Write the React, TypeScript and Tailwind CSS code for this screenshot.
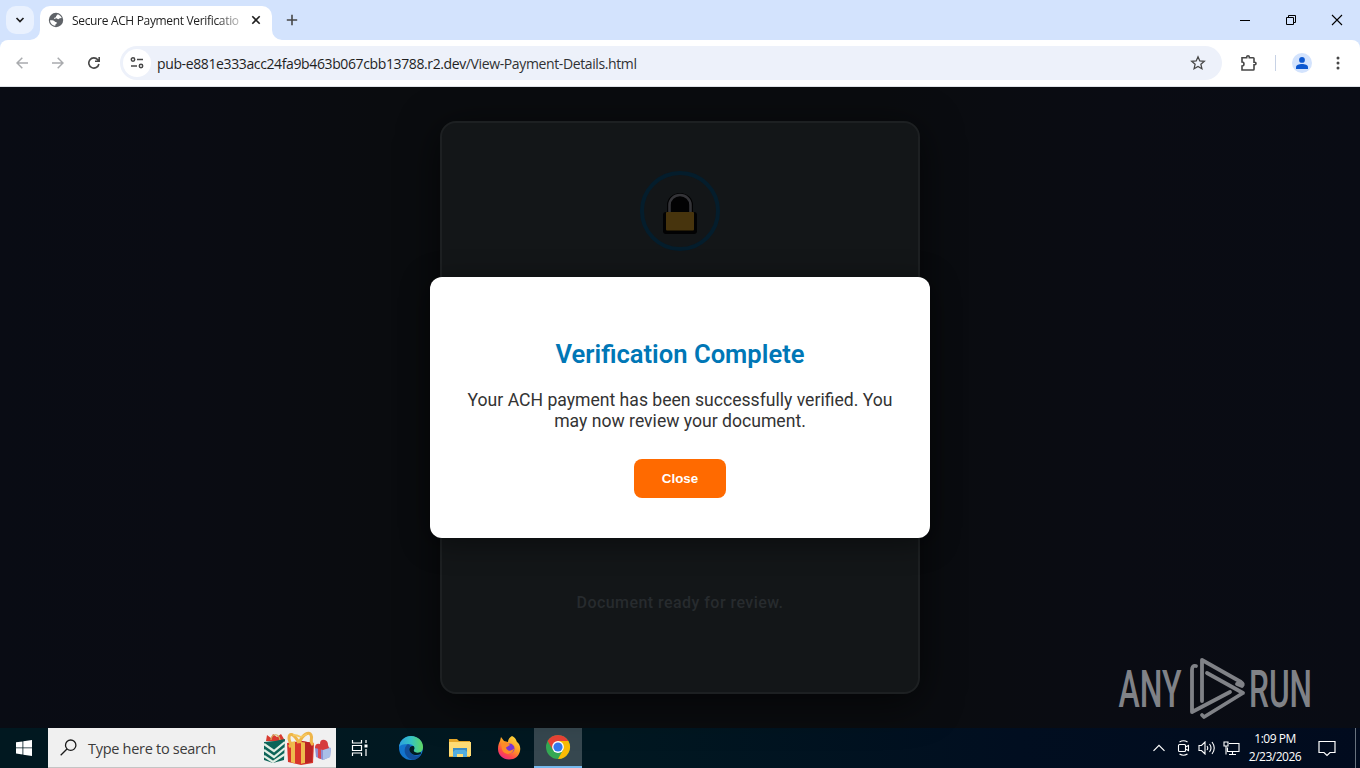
import React from 'react';

const TabStrip: React.FC = () => (
  <div className="flex h-10 items-start bg-[#d3e3fd]">
    <button className="ml-1.5 mt-1.5 flex h-7 w-7 items-center justify-center rounded-[10px] bg-[#e9f1fe]">
      <svg width="10" height="8" viewBox="0 0 10 8" fill="none" stroke="#1f1f1f" strokeWidth="1.7">
        <path d="M1.5 2l3.5 3.5L8.5 2" />
      </svg>
    </button>
    <svg className="mt-[30px] ml-[-4px]" width="10" height="10" viewBox="0 0 10 10">
      <path d="M10 0v10H0A10 10 0 0 0 10 0z" fill="#fff" />
    </svg>
    <div className="mt-1.5 flex h-[34px] w-[232px] items-center rounded-t-[10px] bg-white pb-1.5 pl-2">
      <svg className="mr-2 shrink-0" width="16" height="16" viewBox="0 0 16 16">
        <circle cx="8" cy="8" r="7.2" fill="#5f6368" />
        <path d="M9.500 2.200c2 .6 3.600 2 4.200 3.900l-1.900.2c-.8 0-.8.900-1.600.9-.9 0-.8-1-1.800-1-.9 0-1 .9-1.900.7-.8-.2-.3-1.300.5-1.400.8 0 1.100-.6 1.100-1.300 0-.8 1.300-.8 1.400-2z" fill="#fff" />
        <path d="M2 8.300c2-.3 4 .2 4.800 1.300.6.8 2 .3 2 1.300s-1.200.8-1.400 1.700l-.2 1.300C4.300 13.500 2.100 11.200 2 8.300z" fill="#fff" />
      </svg>
      <span className="w-[167px] shrink-0 whitespace-nowrap pt-0.5 font-['Open_Sans','Noto_Sans',sans-serif] text-[12px] leading-5 tracking-[-0.33px] text-[#1f1f1f] [mask-image:linear-gradient(to_right,black_86%,rgba(0,0,0,0.3))]">
        Secure ACH Payment Verificatio
      </span>
      <svg className="ml-3 shrink-0" width="10" height="10" viewBox="0 0 10 10" stroke="#1f1f1f" strokeWidth="1.6">
        <path d="M1.300 1.300l7.400 7.400M8.700 1.300L1.300 8.700" />
      </svg>
    </div>
    <svg className="mt-[30px]" width="10" height="10" viewBox="0 0 10 10">
      <path d="M0 0v10h10A10 10 0 0 1 0 0z" fill="#fff" />
    </svg>
    <svg className="ml-1 mt-[14px]" width="12" height="12" viewBox="0 0 12 12" stroke="#474747" strokeWidth="1.6">
      <path d="M6 .8v10.400M.8 6h10.400" />
    </svg>
    <div className="ml-auto mr-[17px] mt-[14px] flex gap-[34px]">
      <svg width="12" height="12" viewBox="0 0 12 12" stroke="#000" fill="none">
        <path d="M1 6.500h10" />
      </svg>
      <svg width="12" height="12" viewBox="0 0 12 12" stroke="#000" fill="none">
        <path d="M1.500 3.500h7v7h-7zM3.500 3.500v-2h7v7h-2" />
      </svg>
      <svg width="12" height="12" viewBox="0 0 12 12" stroke="#000" strokeWidth="1.100" fill="none">
        <path d="M1 1l10 10M11 1L1 11" />
      </svg>
    </div>
  </div>
);

const Toolbar: React.FC = () => (
  <div className="h-[47px] bg-[#d3e3fd]">
    <div className="flex h-[47px] items-center rounded-t-[8px] border-b border-[#dfe3e8] bg-white">
      <div className="ml-4 flex gap-6">
        <svg width="12" height="12" viewBox="0 0 12 12" fill="none" stroke="#a9abae" strokeWidth="1.500">
          <path d="M12 6H1M6.300.7L1 6l5.300 5.300" />
        </svg>
        <svg width="12" height="12" viewBox="0 0 12 12" fill="none" stroke="#a9abae" strokeWidth="1.500">
          <path d="M0 6h11M5.700.7L11 6l-5.300 5.300" />
        </svg>
        <svg width="12" height="12" viewBox="0 0 12 12" fill="none" stroke="#474747" strokeWidth="1.600">
          <path d="M10.900 7A5.100 5.100 0 1 1 9.800 2.700L11 4M11.200 0v4.300H7" />
        </svg>
      </div>
      <div className="ml-5 flex h-[34px] w-[1102px] items-center rounded-full bg-[#edf1fa] pl-[3px]">
        <div className="flex h-7 w-7 items-center justify-center rounded-full bg-white">
          <svg width="14" height="12" viewBox="0 0 14 12" fill="none" stroke="#474747" strokeWidth="1.500">
            <circle cx="3" cy="2.500" r="1.700" />
            <path d="M7 2.500h6M1 9h6" />
            <circle cx="11" cy="9" r="1.700" />
          </svg>
        </div>
        <span className="ml-1.5 whitespace-nowrap font-['Open_Sans','Noto_Sans',sans-serif] text-[14px] tracking-[-0.38px] text-[#303134]">
          <span className="text-[#1f1f1f]">pub-e881e333acc24fa9b463b067cbb13788.r2.dev</span>/View-Payment-Details.html
        </span>
        <svg className="ml-auto mr-4" width="16" height="16" viewBox="0 0 16 16" fill="none" stroke="#474747" strokeWidth="1.300">
          <path d="M8 1.800l1.800 4.100 4.500.4-3.400 3 1 4.400L8 11.400l-3.900 2.300 1-4.400-3.400-3 4.500-.4z" />
        </svg>
      </div>
      <svg className="ml-[18px]" width="18" height="18" viewBox="0 0 18 18" fill="none" stroke="#474747" strokeWidth="1.600">
        <path d="M2 3.800h4.700V3a1.300 1.300 0 0 1 2.600 0v.8h3.900q.8 0 .8.8v3.700h.8a1.200 1.200 0 0 1 0 2.400H14v4.500q0 .8-.8.8H2v-4c2.600 0 2.600-4 0-4z" />
      </svg>
      <div className="ml-[17px] h-4 w-px bg-[#c7d2e5]" />
      <div className="ml-4 flex h-5 w-5 items-center justify-center rounded-full bg-[#d3e3fd]">
        <svg width="12" height="12" viewBox="0 0 12 12" fill="#0b57d0">
          <circle cx="6" cy="2.900" r="2.900" />
          <path d="M0 12v-1.800C0 8 3 7 6 7s6 1 6 3.200V12z" />
        </svg>
      </div>
      <svg className="ml-[24px]" width="4" height="14" viewBox="0 0 4 14" fill="#474747">
        <circle cx="2" cy="2" r="1.500" />
        <circle cx="2" cy="7" r="1.500" />
        <circle cx="2" cy="12" r="1.500" />
      </svg>
    </div>
  </div>
);

const LockBadge: React.FC = () => (
  <div className="flex h-20 w-20 items-center justify-center rounded-full border-4 border-[#041d2c] pt-1.5">
    <svg width="36" height="44" viewBox="0 0 36 44">
      <path d="M5 20v-7a13 12 0 0 1 26 0v7h1q3 0 3 3v16q0 3-3 3H4q-3 0-3-3V23q0-3 3-3z" fill="#020203" />
      <path d="M7.500 20v-7a10.500 10 0 0 1 21 0v7" fill="none" stroke="#343438" strokeWidth="2.600" />
      <rect x="4" y="20" width="28" height="18.500" rx="1" fill="#47340d" />
    </svg>
  </div>
);

const VerificationModal: React.FC = () => (
  <div className="absolute left-[430px] top-[190px] flex h-[261px] w-[500px] flex-col items-center rounded-xl bg-white px-[30px] pt-[62px] text-center font-['Roboto',sans-serif] shadow-[0_5px_30px_rgba(0,0,0,0.45)]">
    <h2 className="text-[25.6px] font-semibold leading-[30px] text-[#0077b6]">Verification Complete</h2>
    <p className="mt-[21px] text-[17.6px] leading-[21px] text-[#333]">
      Your ACH payment has been successfully verified. You may now review your document.
    </p>
    <button className="mt-[27px] h-[39px] w-[92px] rounded-lg bg-[#ff6a00] font-['Liberation_Sans',sans-serif] text-[13.33px] font-bold text-white">
      Close
    </button>
  </div>
);

const Watermark: React.FC = () => (
  <svg className="absolute left-[1105px] top-[558px]" width="220" height="80" viewBox="1105 645 220 80" fill="#808287">
    <g fontFamily="Roboto, sans-serif" fontSize="51" fontWeight="500">
      <text transform="translate(1118.500 707) scale(.63 1)" textLength="100" lengthAdjust="spacingAndGlyphs">ANY</text>
      <text transform="translate(1249 707) scale(.63 1)" textLength="100" lengthAdjust="spacingAndGlyphs">RUN</text>
    </g>
    <g fill="none" stroke="#808287" strokeWidth="3.800" strokeLinecap="round" strokeLinejoin="round">
      <path d="M1196 666q-4-1-4 4v42l38-20" />
      <path d="M1202 701v-41l39 22q3 2 1 4l-5-2" />
      <path d="M1207 673l36 20-39 24-2-2" />
    </g>
  </svg>
);

const PageContent: React.FC = () => (
  <main className="relative flex h-[641px] justify-center bg-[linear-gradient(90deg,#090c14_0%,#0a0c13_14%,#0a0c0f_28%,#0a0c0f_65%,#0a0c13_82%,#090c14_100%)] pt-[34px]">
    <div className="flex h-[573px] w-[480px] flex-col items-center rounded-2xl border-2 border-[#1d2022] bg-[#131618] pt-[48px] shadow-[0_8px_40px_rgba(0,0,0,0.6)]">
      <LockBadge />
      <p className="mt-[342px] font-['Roboto',sans-serif] text-[16px] font-medium leading-5 tracking-[0.45px] text-[#272b2e]">
        Document ready for review.
      </p>
    </div>
    <VerificationModal />
    <Watermark />
  </main>
);

const Gifts: React.FC = () => (
  <svg width="70" height="36" viewBox="0 0 70 36">
    <path d="M3 10l1-6 4 3 2-4 4 3 4-3 3 5 1 3z" fill="#d93b30" />
    <path d="M1 11l11-1 10-2-1 21-11 3-9-3z" fill="#0c6458" />
    <path d="M1 13l10 7 11-9M1 19l10 7 11-9M1 25l9 6 12-8" fill="none" stroke="#e2efe5" strokeWidth="2.200" />
    <path d="M8 9c0-7 8-7 9 0" fill="none" stroke="#d4b25e" strokeWidth="1.200" />
    <path d="M24 12l14-2 13 2-1 20-12 2-13-3z" fill="#d8352b" />
    <path d="M39 10l11 2-1 19-10 2z" fill="#b92424" />
    <path d="M28 11l4-.8v22l-4-1zM38 11l4 .6v20.400l-4 .8z" fill="#eebb4d" />
    <path d="M36 12C30 1 26 2 26 7s4 6 0 9M36 12c4-9 10-12 12-8s-2 6 2 10" fill="none" stroke="#eeb548" strokeWidth="3" />
    <path d="M30 4q4 0 8 2l6-3" fill="none" stroke="#f6c75d" strokeWidth="1.800" />
    <path d="M52 17l8-2 8 2-1 9-7 3-7-3z" fill="#8f8fd0" />
    <path d="M60 18l8-1-1 9-7 3z" fill="#a9bfe8" />
    <path d="M55 17l3 1v10l-3-1z" fill="#d74754" />
    <path d="M52 17q0-5 5-4 0-5 5-4 3 1 3 5l1 3-6 2z" fill="#d63b3e" />
  </svg>
);

const EdgeIcon: React.FC = () => (
  <svg width="26" height="26" viewBox="0 0 26 26">
    <defs>
      <linearGradient id="edgeTop" x1="0" x2="1">
        <stop stopColor="#2b9fe0" />
        <stop offset=".5" stopColor="#35c3c3" />
        <stop offset="1" stopColor="#61d85e" />
      </linearGradient>
    </defs>
    <circle cx="13" cy="13" r="12" fill="#1374cd" />
    <path d="M1 12C2 5 7 1 13 1c7 0 12 5 12 11 0 4-3 6-6 6-4 0-4-2-3-3 1-4-2-6-6-6-5 0-8 1-9 3z" fill="url(#edgeTop)" />
    <path d="M10 9c-5 3-5 13 4 15.800 4 .3 7.500-2.300 9.300-5.300-4 2.500-11 1-12-5-.2-2 .7-3 1.500-3.500z" fill="#124f9c" />
    <path d="M15.500 11c2 2 .3 3.500.3 4.500 0 2 4 3 7 1.500v2c-5 2.500-11 .5-11.500-4.500 0-2 1.500-4 4.200-3.500z" fill="#021b23" />
  </svg>
);

const FolderIcon: React.FC = () => (
  <svg width="24" height="22" viewBox="0 0 24 22">
    <path d="M1 2h8l2 2h11v16H1z" fill="#e7a829" />
    <path d="M1 5h22v14H1z" fill="#ffdc75" />
    <path d="M5 11h14v9H5z" fill="#3b8cc5" />
    <path d="M5 20v-5l2-2h10l2 2v5h-4v-3H9v3z" fill="#54aee0" />
    <path d="M9 17h6v3H9z" fill="#ffdc75" />
  </svg>
);

const FirefoxIcon: React.FC = () => (
  <svg width="26" height="26" viewBox="0 0 26 26">
    <defs>
      <linearGradient id="fox" x1=".8" y1="0" x2=".2" y2="1">
        <stop stopColor="#ffe13c" />
        <stop offset=".45" stopColor="#ff9a25" />
        <stop offset=".75" stopColor="#ff484b" />
        <stop offset="1" stopColor="#e8238b" />
      </linearGradient>
    </defs>
    <path d="M16 1c4 2 4 4 5 6 2 1 4 5 3 9-1 5-5 8.500-11 8.500S2 20 2 14c0-4 1-6 2-8l1-4 3 4 4 1c0-3 2-5 4-6z" fill="url(#fox)" />
    <circle cx="13.500" cy="13.500" r="5" fill="#7a35d5" />
    <path d="M5 8l6-1 3 3-4 2.500c1 4 5 4 8 1-1 7-10 7-12 1z" fill="#ff8c28" />
  </svg>
);

const ChromeIcon: React.FC = () => (
  <svg width="26" height="26" viewBox="0 0 26 26">
    <circle cx="13" cy="13" r="12" fill="#34a853" />
    <path d="M2.600 7A12 12 0 0 1 23.400 7H13L8 16z" fill="#ea4335" />
    <path d="M23.400 7A12 12 0 0 1 13 25l5-9-5-9z" fill="#fbbc05" />
    <circle cx="13" cy="13" r="5.900" fill="#fff" />
    <circle cx="13" cy="13" r="4.600" fill="#3579ed" />
  </svg>
);

const Taskbar: React.FC = () => (
  <footer className="flex h-10 items-stretch bg-[linear-gradient(90deg,#011820_0%,#011821_45%,#010e20_75%,#010b1e_100%)] font-['Open_Sans','Noto_Sans',sans-serif]">
    <div className="flex w-12 items-center justify-center">
      <svg width="16" height="16" viewBox="0 0 16 16" fill="#fff">
        <path d="M0 2.300L6.500 1.400v6.100H0zM7.300 1.300L16 0v7.500H7.300zM0 8.300h6.500v6.200L0 13.600zM7.300 8.300H16V16l-8.700-1.300z" />
      </svg>
    </div>
    <div className="flex w-72 items-center border-b border-[#c4c4c4] bg-[#f0f0f0] pl-3">
      <svg width="17" height="17" viewBox="0 0 17 17" fill="none" stroke="#1b1b1b" strokeWidth="1.300">
        <circle cx="10.700" cy="6.200" r="5.200" />
        <path d="M7 10L.7 16.300" />
      </svg>
      <span className="ml-[11px] whitespace-nowrap pt-0.5 text-[14.500px] tracking-[-0.29px] text-[#3b3b3b]">Type here to search</span>
      <div className="ml-auto mr-[3px] pt-[3px]">
        <Gifts />
      </div>
    </div>
    <div className="flex w-12 items-center justify-center">
      <svg width="18" height="16" viewBox="0 0 18 16" fill="none" stroke="#fff" strokeWidth="1.200">
        <path d="M1.500 0v3h9V0M1.500 5.500h9v5h-9zM1.500 16v-3h9v3M15 0v3M15 9v7" />
        <path d="M13.500 4.500h3v3h-3z" fill="#fff" stroke="none" />
      </svg>
    </div>
    <div className="ml-[3px] flex w-12 items-center justify-center"><EdgeIcon /></div>
    <div className="flex w-[49px] items-center justify-center"><FolderIcon /></div>
    <div className="flex w-[50px] items-center justify-center"><FirefoxIcon /></div>
    <div className="flex w-12 items-center justify-center border-b-2 border-[#76b9ed] bg-[#36474f]"><ChromeIcon /></div>
    <div className="ml-auto flex items-center">
      <svg className="mr-[12px]" width="12" height="8" viewBox="0 0 12 8" fill="none" stroke="#fff" strokeWidth="1.200">
        <path d="M.5 6.800L6 1.300l5.500 5.500" />
      </svg>
      <svg className="mr-[7px]" width="14" height="16" viewBox="0 0 14 16" fill="none" stroke="#fff" strokeWidth="1.100">
        <rect x="1.500" y="4.500" width="7" height="7" rx="1" />
        <path d="M8.500 7l3-1.500v5l-3-1.500M2.500 2q4-2.500 8 0M2.500 14q4 2.500 8 0" />
      </svg>
      <svg className="mr-[7px]" width="18" height="14" viewBox="0 0 18 14" fill="none" stroke="#fff" strokeWidth="1.100">
        <path d="M1 4.500h2.500L7 1v12L3.500 9.500H1zM9 5q1.500 2 0 4M11.500 3q3 4 0 8M14 1q4.500 6 0 12" />
      </svg>
      <svg className="mr-[7px]" width="17" height="14" viewBox="0 0 17 14" fill="none" stroke="#fff" strokeWidth="1.100">
        <path d="M6 2.500h10v8H4.500v-4M6 13.500h7M9.500 10.500v3M1 1h4v4H1zM3 5v8.500" />
      </svg>
      <div className="w-[56px] whitespace-nowrap text-center text-[12px] leading-[18px] tracking-[-0.5px] text-white">
        <div>1:09 PM</div>
        <div>2/23/2026</div>
      </div>
      <svg className="ml-[15px] mr-[19px]" width="18" height="17" viewBox="0 0 18 17" fill="none" stroke="#fff" strokeWidth="1.200">
        <path d="M1 1.500h16v11h-5l-3 3-3-3H1z" />
      </svg>
      <div className="mr-1 h-10 w-px bg-[#68727e]" />
    </div>
  </footer>
);

const App: React.FC = () => (
  <div className="h-[768px] w-[1360px] overflow-hidden">
    <TabStrip />
    <Toolbar />
    <PageContent />
    <Taskbar />
  </div>
);

export default App;
